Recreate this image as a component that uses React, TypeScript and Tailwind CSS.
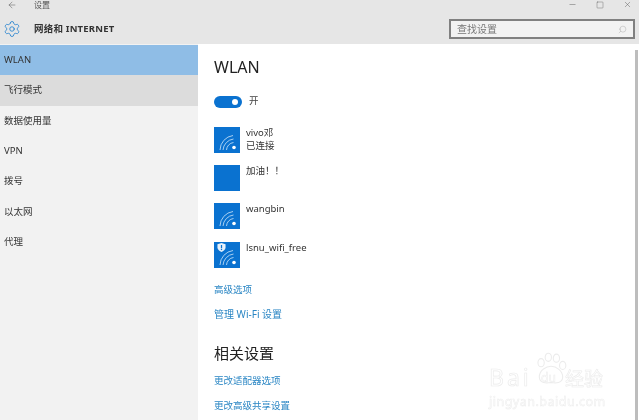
import React from 'react';
import { ArrowLeft, Minus, Square, X, Search, Settings } from 'lucide-react';

const navItems = ["WLAN", "飞行模式", "数据使用量", "VPN", "拨号", "以太网", "代理"];

function WifiTile({ waves = true, shield = false }: { waves?: boolean; shield?: boolean }) {
    return (
        <div className="relative w-[26px] h-[26px] bg-[#0a72d0] shrink-0">
            {waves && (
                <svg viewBox="0 0 26 26" className="absolute inset-0 w-full h-full" fill="none" stroke="#a9d0f2" strokeWidth="1">
                    <path d="M6 23 A15 15 0 0 1 19 8.5" />
                    <path d="M9 23 A12 12 0 0 1 19.5 12" />
                    <path d="M12.5 23 A8 8 0 0 1 19.5 15.5" />
                    <circle cx="20" cy="20.5" r="1.8" fill="#ffffff" stroke="none" />
                </svg>
            )}
            {shield && (
                <svg viewBox="0 0 10 10" className="absolute left-[3px] top-[1px] w-[9px] h-[9px]">
                    <path d="M5 0 L9.5 1.5 V5 C9.5 7.5 7 9 5 10 C3 9 .5 7.5 .5 5 V1.5 Z" fill="#e8f2fb" />
                    <rect x="4.3" y="2.2" width="1.4" height="3.6" fill="#0a72d0" />
                    <rect x="4.3" y="6.5" width="1.4" height="1.4" fill="#0a72d0" />
                </svg>
            )}
        </div>
    );
}

function Network({ name, status, waves, shield, className }: { name: string; status?: string; waves?: boolean; shield?: boolean; className?: string }) {
    return (
        <div className={`flex gap-[6px] ${className ?? ""}`}>
            <WifiTile waves={waves} shield={shield} />
            <div className="text-[9.5px] leading-[13px] text-[#333] -mt-[1px]">
                <div>{name}</div>
                {status && <div>{status}</div>}
            </div>
        </div>
    );
}

export default function App() {
    return (
        <div className="relative w-[639px] h-[420px] overflow-hidden bg-white text-[#222] blur-[0.4px] font-['Noto_Sans','Noto_Sans_CJK_SC',sans-serif]">
            {/* title bar */}
            <div className="h-[14px] bg-[#e6e6e6] flex items-start pl-[7px] pr-[7px] text-[#555]">
                <ArrowLeft size={10} strokeWidth={1.2} />
                <span className="ml-[17px] text-[8px] leading-[9px]">设置</span>
                <div className="ml-auto flex items-center gap-[19px]">
                    <Minus size={9} strokeWidth={1.2} />
                    <Square size={8} strokeWidth={1.2} />
                    <X size={9} strokeWidth={1.2} />
                </div>
            </div>
            {/* header */}
            <div className="h-[30px] bg-[#e6e6e6] flex items-center pl-[3px] pr-[4px]">
                <Settings size={18} strokeWidth={1.1} className="text-[#1f7fcf]" />
                <span className="ml-[13px] text-[9.5px] font-bold text-[#333] tracking-[0.2px]">网络和 INTERNET</span>
                <div className="ml-auto w-[186px] h-[20px] bg-[#f2f2f2] border-2 border-[#808080] flex items-center px-[6px] text-[10px] text-[#777]">
                    <span>查找设置</span>
                    <Search size={9} strokeWidth={1} className="ml-auto -scale-x-100 text-[#999]" />
                </div>
            </div>
            <div className="flex h-[376px]">
                {/* sidebar */}
                <div className="w-[198px] bg-[#f2f2f2] shrink-0 pt-[1px]">
                    {navItems.map((item, i) => (
                        <div
                            key={item}
                            className={`h-[30.3px] flex items-center pl-[4px] text-[9.5px] text-[#333] ${i === 0 ? "bg-[#8fbde6]" : i === 1 ? "bg-[#dcdcdc]" : ""}`}
                        >
                            {item}
                        </div>
                    ))}
                </div>
                {/* main */}
                <div className="flex-1 pl-[16px] pt-[13px] relative">
                    <h1 className="text-[16px] leading-[20px] text-[#222]">WLAN</h1>
                    <div className="flex items-center mt-[18px] h-[13px]">
                        <div className="w-[28px] h-[12px] rounded-full bg-[#0a72d0] flex items-center justify-end pr-[4px]">
                            <div className="w-[6px] h-[6px] rounded-full bg-white" />
                        </div>
                        <span className="ml-[7px] text-[9.5px] text-[#444]">开</span>
                    </div>
                    <Network name="vivo邓" status="已连接" className="mt-[19px]" />
                    <Network name="加油！！" waves={false} className="mt-[12px]" />
                    <Network name="wangbin" className="mt-[12px]" />
                    <Network name="lsnu_wifi_free" shield className="mt-[13px]" />
                    <div className="mt-[15px] text-[9.5px] leading-[14px] text-[#2a86c4]">高级选项</div>
                    <div className="mt-[10px] text-[10px] leading-[14px] text-[#2a86c4]">管理 Wi-Fi 设置</div>
                    <h2 className="mt-[22px] text-[15px] leading-[20px] text-[#222]">相关设置</h2>
                    <div className="mt-[11px] text-[9.5px] leading-[14px] text-[#2a86c4]">更改适配器选项</div>
                    <div className="mt-[11px] text-[9.5px] leading-[14px] text-[#2a86c4]">更改高级共享设置</div>
                </div>
            </div>
            {/* scrollbar */}
            <div className="absolute right-[1px] top-[50px] bottom-0 w-[3px] bg-[#bdbdbd]" />
            {/* watermark */}
            <div className="absolute left-[489px] top-[352px] w-[120px] h-[56px] text-white">
                <svg viewBox="0 0 40 36" className="absolute left-[44px] top-0 w-[36px] h-[34px]" fill="none" stroke="#ececec" strokeWidth="1.2">
                    <ellipse cx="9" cy="11" rx="3.5" ry="4.5" />
                    <ellipse cx="17" cy="5" rx="3.5" ry="4.5" />
                    <ellipse cx="26" cy="6" rx="3.5" ry="4.5" />
                    <ellipse cx="33" cy="14" rx="3.5" ry="4.5" />
                    <path d="M7 27 C7 19 15 15 20 15 C26 15 33 20 33 27 C33 34 25 34 20 33 C15 34 7 34 7 27 Z" />
                </svg>
                <span className="absolute left-0 top-[13px] text-[23px] leading-[24px] tracking-[3px] [-webkit-text-stroke:0.7px_#ececec]">Bai</span>
                <span className="absolute left-[52px] top-[19px] text-[12px] leading-[14px] [-webkit-text-stroke:0.5px_#ececec]">du</span>
                <span className="absolute left-[76px] top-[16px] text-[19px] leading-[22px] [-webkit-text-stroke:0.6px_#ececec]">经验</span>
                <span className="absolute left-0 top-[43px] text-[12.5px] leading-[14px] tracking-[0.5px] whitespace-nowrap [-webkit-text-stroke:0.5px_#ececec]">jingyan.baidu.com</span>
            </div>
        </div>
    );
}
